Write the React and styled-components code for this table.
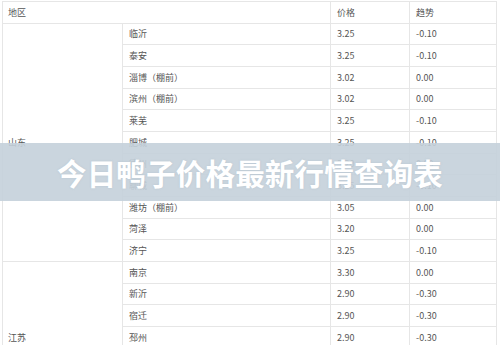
import React from "react";
import styled, { createGlobalStyle } from "styled-components";

const Global = createGlobalStyle`
  html, body { margin: 0; padding: 0; background: #fff; }
  body { width: 500px; height: 345px; overflow: hidden; }
`;

const Page = styled.div`
  position: relative;
  width: 500px;
  height: 345px;
  overflow: hidden;
  padding: 1px 3px 0 2px;
  box-sizing: border-box;
  font-family: "Microsoft YaHei", "Noto Sans CJK SC", "Noto Sans", sans-serif;
`;

const Table = styled.table`
  width: 100%;
  border-collapse: collapse;
  table-layout: fixed;
  font-size: 9px;
  color: #555;
`;

const Row = styled.tr`
  height: 21.67px;
`;

const Cell = styled.td`
  border: 1px solid #e6e6e6;
  padding: 0 0 0 ${(p) => p.$pl || 6}px;
  vertical-align: middle;
  white-space: nowrap;
  line-height: 1;
`;

const Head = styled(Cell).attrs({ as: "th" })`
  font-weight: normal;
  text-align: left;
`;

const Banner = styled.div`
  position: absolute;
  left: 0;
  right: 0;
  top: 143px;
  height: 58px;
  background: rgba(196, 208, 218, 0.9);
  display: flex;
  align-items: center;
  justify-content: center;
`;

const Title = styled.h1`
  margin: 0;
  color: #fff;
  font-family: "Noto Sans CJK SC", sans-serif;
  font-weight: 700;
  font-size: 29.5px;
  letter-spacing: 0.2px;
  text-shadow: 0 0 2px rgba(150, 165, 180, 0.35);
`;

const groups = [
  {
    region: "山东",
    rows: [
      ["临沂", "3.25", "-0.10"],
      ["泰安", "3.25", "-0.10"],
      ["淄博（棚前）", "3.02", "0.00"],
      ["滨州（棚前）", "3.02", "0.00"],
      ["莱芜", "3.25", "-0.10"],
      ["肥城", "3.25", "-0.10"],
      ["德州", "3.20", "0.00"],
      ["聊城", "3.25", "-0.10"],
      ["潍坊（棚前）", "3.05", "0.00"],
      ["菏泽", "3.20", "0.00"],
      ["济宁", "3.25", "-0.10"],
    ],
  },
  {
    region: "江苏",
    rows: [
      ["南京", "3.30", "0.00"],
      ["新沂", "2.90", "-0.30"],
      ["宿迁", "2.90", "-0.30"],
      ["邳州", "2.90", "-0.30"],
      ["徐州", "2.90", "-0.30"],
      ["连云港", "2.90", "-0.30"],
      ["淮安", "2.90", "-0.30"],
    ],
  },
];

export default function App() {
  return (
    <>
      <Global />
      <Page>
        <Table>
          <colgroup>
            <col style={{ width: "120px" }} />
            <col style={{ width: "208px" }} />
            <col style={{ width: "79px" }} />
            <col />
          </colgroup>
          <thead>
            <Row>
              <Head $pl={5} colSpan={2}>地区</Head>
              <Head>价格</Head>
              <Head>趋势</Head>
            </Row>
          </thead>
          <tbody>
            {groups.map((g) =>
              g.rows.map((r, i) => (
                <Row key={g.region + r[0]}>
                  {i === 0 && (
                    <Cell $pl={5} rowSpan={g.rows.length}>
                      {g.region}
                    </Cell>
                  )}
                  <Cell>{r[0]}</Cell>
                  <Cell>{r[1]}</Cell>
                  <Cell>{r[2]}</Cell>
                </Row>
              ))
            )}
          </tbody>
        </Table>
        <Banner>
          <Title>今日鸭子价格最新行情查询表</Title>
        </Banner>
      </Page>
    </>
  );
}
